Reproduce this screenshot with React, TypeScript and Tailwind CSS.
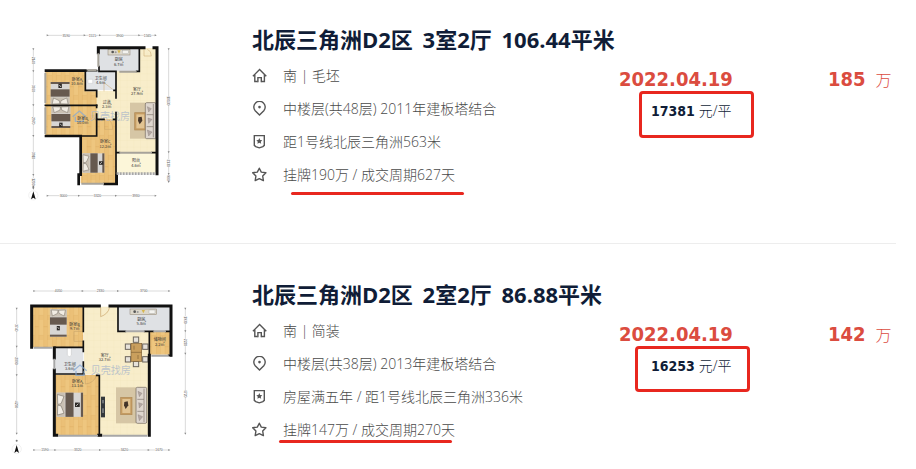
import type { ReactNode } from "react";

const CJK = "font-['Open_Sans','Noto_Sans_CJK_SC',sans-serif]";
const FIGURES = "font-['DejaVu_Sans_Condensed','DejaVu_Sans','Noto_Sans_CJK_SC',sans-serif]";

function HomeIcon() {
  return (
    <svg viewBox="0 0 16 16" className="size-4" fill="none" stroke="#555" strokeWidth="1.4" aria-hidden="true">
      <path d="M.9 8.2 7.6 1.6l6.7 6.6M2.8 6.6v6.9h2.8M12.4 6.6v6.9H9.6" />
      <path d="M5.9 14.2V9.6h3.4v4.6" />
    </svg>
  );
}

function PinIcon() {
  return (
    <svg viewBox="0 0 16 16" className="size-4" fill="none" stroke="#555" strokeWidth="1.4" aria-hidden="true">
      <path d="M7.5 14 3.2 9.8a5.7 5.7 0 1 1 8.6 0Z" />
      <circle cx="7.5" cy="6.1" r="1.3" fill="#555" stroke="none" />
    </svg>
  );
}

function BadgeIcon() {
  return (
    <svg viewBox="0 0 16 16" className="size-4" fill="none" stroke="#555" strokeWidth="1.4" aria-hidden="true">
      <path d="M2.3 1.6h10v9.8l-1.4 1.2-3.6 1.2-3.6-1.2-1.4-1.2Z" />
      <path d="m7.3 4 .9 1.9 2.1.3-1.5 1.5.4 2.1-1.9-1-1.9 1 .4-2.1-1.5-1.5 2.1-.3Z" fill="#555" stroke="none" />
    </svg>
  );
}

function StarIcon() {
  return (
    <svg viewBox="0 0 16 16" className="size-4" fill="none" stroke="#555" strokeWidth="1.4" strokeLinejoin="round" aria-hidden="true">
      <path d="m7.3 1.2 2 3.9 4.6.7-3.2 3.2.7 4.6-4.1-1.9-4.1 1.9.7-4.6L.7 5.8l4.6-.7Z" />
    </svg>
  );
}

const ICONS = [HomeIcon, PinIcon, BadgeIcon, StarIcon];

function Label({ x, y, name, area }: { x: number; y: number; name: string; area: string }) {
  return (
    <text x={x} y={y} textAnchor="middle" fontSize="12" fill="#333" className="font-['Noto_Sans_CJK_SC',sans-serif]">
      {name}
      <tspan x={x} dy="13" fontSize="12">{area}</tspan>
    </text>
  );
}

/* Dimension line with a tick at every stop and a figure between stops. */
function Ruler({ at, stops, values, vertical }: { at: number; stops: number[]; values: string[]; vertical?: boolean }) {
  return (
    <g transform={vertical ? `translate(${at} 0) rotate(90)` : `translate(0 ${at})`}>
      {values.map((v, i) => {
        const a = stops[i];
        const b = stops[i + 1];
        const mid = (a + b) / 2;
        const gap = Math.min(11, (b - a) / 3);
        return (
          <g key={i}>
            <path d={`M${a} 0H${mid - gap}M${mid + gap} 0H${b}`} stroke="#b5b5b5" strokeWidth="1.5" />
            <text x={mid} y="4" textAnchor="middle" fontSize="10" fill="#555" className="font-['Liberation_Sans',sans-serif]">{v}</text>
          </g>
        );
      })}
      {stops.map((s) => (
        <path key={s} d={`M${s - 3} -3 ${s + 3} 0 ${s - 3} 3Z`} fill="#888" />
      ))}
    </g>
  );
}

/* Double bed, headboard on the left edge of its own frame. */
function Bed({ transform, w = 72 }: { transform: string; w?: number }) {
  return (
    <g transform={transform}>
      <rect width={w} height="66" fill="#d8d6d4" />
      <rect x="0" y="0" width="22" height="66" fill="#c9c0b3" />
      <path d="M2 5 20 10 12 30 3 32ZM2 61 20 56 12 36 3 34Z" fill="#f1ece3" stroke="#6d655c" strokeWidth="1.5" />
      <rect x="24" y="0" width="22" height="66" fill="#66594f" />
      <rect x={w - 6} y="0" width="6" height="66" fill="#66594f" />
      <rect x="50" y="27" width="13" height="12" fill="#2c2927" />
      <path d="m53 36 6-6" stroke="#fff" strokeWidth="2" />
    </g>
  );
}

function Stove({ x, y, w }: { x: number; y: number; w: number }) {
  return (
    <g transform={`translate(${x} ${y})`}>
      <rect width={w} height="17" fill="#ddd8cc" stroke="#8b8170" strokeWidth="1.5" />
      <circle cx="14" cy="8" r="4" fill="#555" />
      <circle cx="23" cy="9" r="3" fill="#999" />
      <path d={`M${w / 2 - 5} 3h10l-5 10Z`} fill="#d7b64d" />
      <rect x={w - 23} y="3" width="18" height="10" fill="#f4f3ef" stroke="#999" />
    </g>
  );
}

function Lounge({ x, y, rug, sofa }: { x: number; y: number; rug: number; sofa: number }) {
  return (
    <g transform={`translate(${x} ${y})`}>
      <rect width={rug} height="108" fill="#d6c6a5" />
      <rect x="14" y="30" width="34" height="52" fill="#c49b61" stroke="#b08a58" strokeWidth="2" />
      <rect x="19" y="35" width="24" height="42" fill="#e2c493" />
      <path d="m25 44 10-2 2 12-8 11-5-11Z" fill="#44352a" />
      <g transform={`translate(${sofa} 0)`}>
        <rect width="32" height="108" rx="4" fill="#ded6ce" stroke="#6e6459" strokeWidth="2" />
        <path d="M24 4v100M4 36h20M4 72h20" stroke="#7e746b" strokeWidth="2" />
        <path d="m6 12 12 6-8 10ZM8 46l12 4-10 12ZM6 82l14 6-10 12Z" fill="#b3a7a3" stroke="#81736c" />
      </g>
    </g>
  );
}

function Compass({ x, y }: { x: number; y: number }) {
  return (
    <g transform={`translate(${x} ${y})`}>
      <circle r="14" fill="none" stroke="#e2e2e2" strokeWidth="1.5" />
      <path d="M0-12 7 12 0 7-7 12Z" fill="#111" />
      <circle cy="-25" r="3" fill="#777" />
    </g>
  );
}

function Watermark({ x, y }: { x: number; y: number }) {
  return (
    <g opacity=".75">
      <path d={`M${x - 22} ${y}l20-17 20 17M${x - 14} ${y}v14h24v-14`} fill="none" stroke="#86a9d3" strokeWidth="4" />
      <text x={x + 30} y={y + 10} fontSize="30" fill="#a8b6ca" className="font-['Noto_Sans_CJK_SC',sans-serif]">贝壳找房</text>
    </g>
  );
}

function PlanDefs({ id }: { id: string }) {
  return (
    <defs>
      <pattern id={`${id}-wood`} width="26" height="60" patternUnits="userSpaceOnUse">
        <rect width="26" height="60" fill="#ebc077" />
        <path d="M0 0V60M13 0V60M0 20H13M13 46H26" stroke="#dcab5d" strokeWidth="1.2" />
        <rect x="13" width="13" height="46" fill="#f0c984" opacity=".6" />
      </pattern>
      <pattern id={`${id}-tile`} width="20" height="20" patternUnits="userSpaceOnUse">
        <rect width="20" height="20" fill="#f8edca" />
        <path d="M0 0H20M0 0V20" stroke="#f1e2b8" strokeWidth="1.2" />
      </pattern>
    </defs>
  );
}

function ThreeRoomPlan() {
  return (
    <svg viewBox="0 0 600 570" className="block w-full" role="img" aria-label="3室2厅户型图">
      <PlanDefs id="a" />
      <Ruler at={46} stops={[143, 254, 300, 418, 467]} values={["3590", "1515", "3900", "1565"]} />
      <Ruler at={527} stops={[143, 237, 348, 467]} values={["3000", "3320", "3930"]} />
      <Ruler vertical at={100} stops={[88, 154, 256, 348, 465, 506]} values={["2140", "3360", "2970", "3910", "1200"]} />
      <Ruler vertical at={506} stops={[88, 397, 462, 486]} values={["10130", "2130", "900"]} />
      <Compass x={100} y={526} />

      <path d="M136 150H258V214H350V490H242V348H136Z" fill="url(#a-wood)" />
      <path d="M348 84H470V398H348V298H290V212H348Z" fill="url(#a-tile)" />
      <rect x="256" y="152" width="92" height="58" fill="#e2e4e7" />
      <rect x="297" y="86" width="120" height="68" fill="#dfe1e4" />
      <rect x="350" y="398" width="118" height="62" fill="#fcf6d9" />
      <Bed transform="translate(152 254) rotate(-90) scale(1 .86)" w={68} />
      <Bed transform="translate(211 258) rotate(90) scale(1 .86)" w={66} />
      <Bed transform="translate(247 400) scale(1 .88)" w={66} />
      <Stove x={324} y={88} w={66} />
      <Lounge x={390} y={248} rug={46} sofa={46} />
      <path d="M264 178h14v12h-14Z" fill="#fff" stroke="#b8babd" />
      <path d="M432 88v20h22q0-16-12-20M314 300v28h24q0-22-12-28M312 188l26 20M312 214v-28" fill="none" stroke="#c9a46a" strokeWidth="1.5" />
      <Watermark x={240} y={290} />

      <g fill="none" stroke="#111" strokeLinecap="square">
        <path d="M295 98V83H432M462 83H471V461" strokeWidth="9" />
        <path d="M138 152H256M138 348H242V464M236 464V492M314 492H350V466" strokeWidth="8" />
        <path d="M136 256H290" strokeWidth="5" />
        <path d="M256 154V211H290V230M290 256V262M290 282V298H312M341 298H348V492M348 298V278M297 140V154H348M348 154V234M418 86V154H410M348 211H342M262 152H290M350 398H358M456 398H468" strokeWidth="5" />
        <path d="M242 348H290V298" strokeWidth="5" />
      </g>
      <path d="M136 158V250M136 262V342M295 100V140M244 491H312M262 151H290M358 155H410M358 398H456" stroke="#a7a39a" strokeWidth="6" />
      <path d="M350 461H468" stroke="#a7a7a7" strokeWidth="8" strokeDasharray="6 3" />

      <Label x={231} y={182} name="卧室A" area="10.6㎡" />
      <Label x={302} y={180} name="卫生间" area="4.6㎡" />
      <Label x={356} y={124} name="厨房" area="6.7㎡" />
      <Label x={411} y={212} name="客厅" area="27.9㎡" />
      <Label x={320} y={251} name="过道" area="2.3㎡" />
      <Label x={248} y={300} name="卧室B" area="10.0㎡" />
      <Label x={316} y={370} name="卧室C" area="12.2㎡" />
      <Label x={408} y={427} name="阳台" area="4.6㎡" />
    </svg>
  );
}

function Chair({ x, y }: { x: number; y: number }) {
  return <rect x={x} y={y} width="16" height="16" fill="#e6e2da" stroke="#6a645c" strokeWidth="3" />;
}

function TwoRoomPlan() {
  return (
    <svg viewBox="0 -15 600 570" className="block w-full" role="img" aria-label="2室2厅户型图">
      <PlanDefs id="b" />
      <Ruler at={33} stops={[103, 248, 354, 508]} values={["4050", "2330", "3700"]} />
      <Ruler at={510} stops={[103, 166, 300, 446, 508]} values={["1590", "3320", "3420", "1670"]} />
      <Ruler vertical at={50} stops={[86, 200, 286, 461]} values={["3740", "2090", "4290"]} />
      <Ruler vertical at={556} stops={[86, 154, 221, 461]} values={["1930", "2220", "6720"]} />
      <Compass x={50} y={507} />

      <path d="M98 80H250V202H98Z" fill="url(#b-wood)" />
      <path d="M252 80H354V154H448V466H300V282H252Z" fill="url(#b-tile)" />
      <path d="M166 284H298V466H166Z" fill="url(#b-wood)" />
      <path d="M448 154H512V224H448Z" fill="url(#b-wood)" />
      <rect x="166" y="204" width="84" height="76" fill="#e1e3e6" />
      <rect x="356" y="82" width="154" height="70" fill="#dfe1e4" />

      <Bed transform="translate(200 88) rotate(90) scale(1 .76)" w={82} />
      <Bed transform="translate(170 338) scale(1.1 1.1)" w={72} />
      <Stove x={390} y={87} w={80} />
      <Lounge x={348} y={322} rug={60} sofa={60} />
      <path d="M202 204h12v22q-6 8-12 0Z" fill="#fff" stroke="#aaa" />
      <Chair x={376} y={192} />
      <Chair x={428} y={192} />
      <Chair x={376} y={230} />
      <Chair x={428} y={230} />
      <Chair x={400} y={171} />
      <Chair x={400} y={244} />
      <rect x="393" y="190" width="32" height="54" fill="#c99f5d" stroke="#7f6035" strokeWidth="2" />
      <path d="M393 217H425M402 197v12M414 225v12" stroke="#7f6035" strokeWidth="2" />
      <rect x="303" y="350" width="12" height="62" fill="#34383c" />
      <path d="M309 360v10M309 385v14" stroke="#a9adb0" strokeWidth="3" />
      <path d="M302 84v26q22-8 26-26M250 154h-28v30h28M256 284v28q26-2 34-28" fill="none" stroke="#c9a46a" strokeWidth="2" />

      <g fill="none" stroke="#111" strokeLinecap="square">
        <path d="M95 202V78H298M330 78H513V226" strokeWidth="9" />
        <path d="M163 204V234M163 270V466H170M448 226V466M296 466H302" strokeWidth="9" />
        <path d="M250 82V154M250 184V214M163 202H248M250 246V282M166 282H252M290 286H298V466M354 82V154H376M434 154H448V226M498 154H510M448 154H460M506 226H513" strokeWidth="5" />
      </g>
      <path d="M102 203H158M163 236V268M174 467H294M306 467H442M454 227H506M376 154H434M460 154H498" stroke="#a7a7a7" strokeWidth="6" />
      <Watermark x={242} y={272} />

      <Label x={224} y={138} name="卧室B" area="9.7㎡" />
      <Label x={424} y={123} name="厨房" area="5.8㎡" />
      <Label x={479} y={184} name="储物间" area="2.2㎡" />
      <Label x={314} y={230} name="客厅" area="32.7㎡" />
      <Label x={209} y={258} name="卫生间" area="3.6㎡" />
      <Label x={232} y={308} name="卧室A" area="13.1㎡" />
    </svg>
  );
}

type Listing = {
  community: string;
  rooms: string;
  size: string;
  details: string[];
  date: string;
  unitPrice: string;
  total: string;
  plan: ReactNode;
  boxClass: string;
  lineClass: string;
};

const LISTINGS: Listing[] = [
  {
    community: "北辰三角洲D2区",
    rooms: "3室2厅",
    size: "106.44平米",
    details: ["南 | 毛坯", "中楼层(共48层) 2011年建板塔结合", "距1号线北辰三角洲563米", "挂牌190万 / 成交周期627天"],
    date: "2022.04.19",
    unitPrice: "17381",
    total: "185",
    plan: <ThreeRoomPlan />,
    boxClass: "-left-3 -top-2 h-[47px] w-[115px]",
    lineClass: "left-2 top-[27px]",
  },
  {
    community: "北辰三角洲D2区",
    rooms: "2室2厅",
    size: "86.88平米",
    details: ["南 | 简装", "中楼层(共38层) 2013年建板塔结合", "房屋满五年 / 距1号线北辰三角洲336米", "挂牌147万 / 成交周期270天"],
    date: "2022.04.19",
    unitPrice: "16253",
    total: "142",
    plan: <TwoRoomPlan />,
    boxClass: "-left-4 -top-2 h-[46px] w-[115px]",
    lineClass: "-left-1 top-5",
  },
];

function ListingItem({ item }: { item: Listing }) {
  return (
    <li className="mb-[11px] flex border-b border-[#ededed] pt-5 pb-[33px] last:mb-0 last:border-0 last:pb-0">
      <div className="w-[200px] shrink-0">{item.plan}</div>
      <div className="ml-[52px] min-w-0 flex-1">
        <h2 className="h-[39px] text-[22px] leading-[38px] font-bold whitespace-nowrap text-[#101d37]">
          {item.community} <span className="ml-1">{item.rooms}</span> <span className="ml-1">{item.size}</span>
        </h2>
        <div className="flex">
          <ul className="min-w-0 flex-1 text-sm font-light text-[#4a4a4a]">
            {item.details.map((text, i) => {
              const Icon = ICONS[i];
              return (
                <li key={text} className="flex h-[33px] items-center gap-[15px] whitespace-nowrap">
                  <Icon />
                  <span className="relative">
                    {text}
                    {i === 3 && <span className={`absolute h-[3px] w-[173px] rounded-full bg-[#e8271f] ${item.lineClass}`} />}
                  </span>
                </li>
              );
            })}
          </ul>
          <div className={`w-[209px] shrink-0 pt-2 ${FIGURES}`}>
            <time dateTime="2022-04-19" className="block text-xl leading-6 font-bold text-[#db4c3f]">{item.date}</time>
            <p className="relative mt-2 ml-8 text-sm leading-6 text-[#101d37]">
              <strong className="font-bold">{item.unitPrice}</strong>
              <span className={`ml-1 font-light ${CJK}`}>元/平</span>
              <span className={`absolute rounded-sm border-3 border-[#e8271f] ${item.boxClass}`} />
            </p>
          </div>
          <p className={`w-[68px] shrink-0 pt-2 text-xl leading-6 whitespace-nowrap text-[#db4c3f] ${FIGURES}`}>
            <strong className="font-bold">{item.total}</strong>
            <span className={`ml-[10px] text-base leading-6 font-light ${CJK}`}>万</span>
          </p>
        </div>
      </div>
    </li>
  );
}

export default function App() {
  return (
    <main className={`min-h-screen bg-white pr-5 ${CJK}`}>
      <ul>
        {LISTINGS.map((item) => (
          <ListingItem key={item.size} item={item} />
        ))}
      </ul>
    </main>
  );
}
